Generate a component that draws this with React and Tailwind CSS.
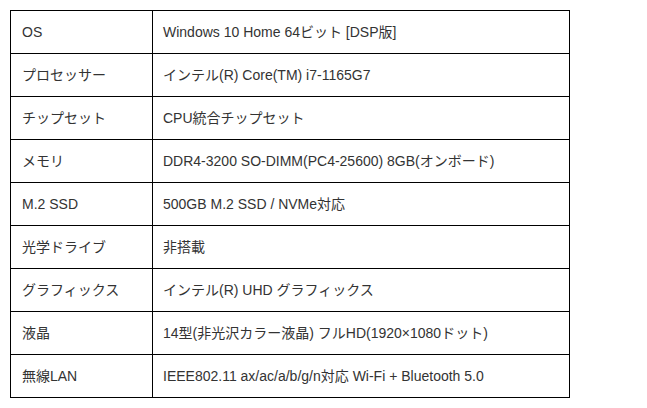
import React from 'react';

const specs = [
  ['OS', 'Windows 10 Home 64ビット [DSP版]'],
  ['プロセッサー', 'インテル(R) Core(TM) i7-1165G7'],
  ['チップセット', 'CPU統合チップセット'],
  ['メモリ', 'DDR4-3200 SO-DIMM(PC4-25600) 8GB(オンボード)'],
  ['M.2 SSD', '500GB M.2 SSD / NVMe対応'],
  ['光学ドライブ', '非搭載'],
  ['グラフィックス', 'インテル(R) UHD グラフィックス'],
  ['液晶', '14型(非光沢カラー液晶) フルHD(1920×1080ドット)'],
  ['無線LAN', 'IEEE802.11 ax/ac/a/b/g/n対応 Wi-Fi + Bluetooth 5.0'],
];

export default function App() {
  return (
    <div
      className="min-h-screen bg-white p-[10px] text-[14px] text-[#333]"
      style={{ fontFamily: '"Liberation Sans", "Noto Sans CJK JP", sans-serif' }}
    >
      <table className="w-[560px] border-collapse border border-black">
        <tbody>
          {specs.map(([label, value]) => (
            <tr key={label} className="h-[43px]">
              <td className="w-[142px] border border-black pl-[11px] align-middle">{label}</td>
              <td className="border border-black pl-[10px] align-middle">{value}</td>
            </tr>
          ))}
        </tbody>
      </table>
    </div>
  );
}
